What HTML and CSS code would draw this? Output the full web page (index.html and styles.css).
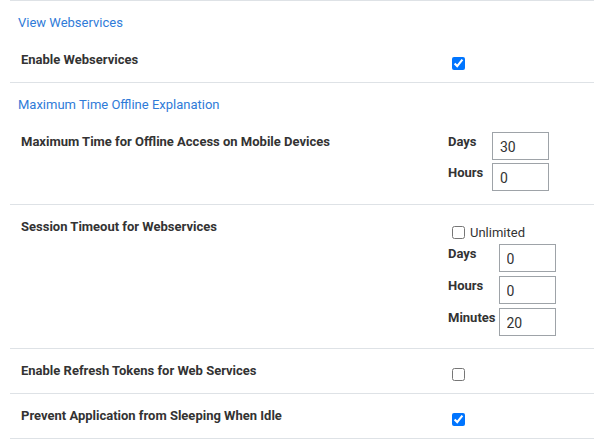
FILE: index.html
```html
<!DOCTYPE html>
<html>
<head>
<meta charset="utf-8">
<link rel="stylesheet" href="styles.css">
</head>
<body>
<div class="page">
  <div class="section">
    <div class="link-row"><a class="link" href="#">View Webservices</a></div>
    <div class="setting">
      <div class="label">Enable Webservices</div>
      <div class="control check-cell"><input type="checkbox" checked></div>
    </div>
  </div>
  <div class="section">
    <div class="link-row"><a class="link" href="#">Maximum Time Offline Explanation</a></div>
    <div class="setting">
      <div class="label">Maximum Time for Offline Access on Mobile Devices</div>
      <div class="control form-cell">
        <div class="fields">
          <span class="flabel">Days</span><input class="num" type="text" value="30">
          <span class="flabel">Hours</span><input class="num" type="text" value="0">
        </div>
      </div>
    </div>
  </div>
  <div class="section">
    <div class="setting">
      <div class="label">Session Timeout for Webservices</div>
      <div class="control unl-cell">
        <label class="unl"><input type="checkbox">Unlimited</label>
        <div class="fields fields-wide">
          <span class="flabel">Days</span><input class="num" type="text" value="0">
          <span class="flabel">Hours</span><input class="num" type="text" value="0">
          <span class="flabel">Minutes</span><input class="num" type="text" value="20">
        </div>
      </div>
    </div>
  </div>
  <div class="section">
    <div class="setting">
      <div class="label">Enable Refresh Tokens for Web Services</div>
      <div class="control check-cell"><input type="checkbox"></div>
    </div>
  </div>
  <div class="section">
    <div class="setting">
      <div class="label">Prevent Application from Sleeping When Idle</div>
      <div class="control check-cell"><input type="checkbox" checked></div>
    </div>
  </div>
</div>
</body>
</html>
```

FILE: styles.css
```css
html, body {
  margin: 0;
  padding: 0;
  background: #fff;
}
body {
  font-family: Roboto, "Liberation Sans", sans-serif;
  font-size: 13px;
  line-height: 15px;
  color: #333;
}
.page {
  margin-left: 10px;
  border-top: 1px solid #dee2e6;
}
.section {
  border-bottom: 1px solid #dee2e6;
}
.link-row {
  height: 37px;
  box-sizing: border-box;
  padding: 14px 8px 0;
}
.link {
  color: #2f7bd8;
  text-decoration: none;
}
.setting {
  display: grid;
  grid-template-columns: 438px 1fr;
  align-items: start;
}
.label {
  font-weight: bold;
  padding: 14px 11px 0;
}
.check-cell {
  padding: 16px 0 9px;
  line-height: 0;
}
.check-cell input,
.unl input {
  width: 13px;
  height: 13px;
  margin: 3px 3px 3px 4px;
  accent-color: #0075ff;
}
.form-cell {
  padding: 12px 0 13px;
}
.unl-cell {
  padding: 17px 0 12px;
}
.unl {
  display: flex;
  align-items: center;
  margin-bottom: 2px;
}
.unl input {
  margin: 4px 5px 3px 4px;
}
.fields {
  display: grid;
  grid-template-columns: minmax(44px, max-content) 57px;
  row-gap: 3px;
}
.fields-wide {
  row-gap: 4px;
}
.flabel {
  font-weight: bold;
  padding: 2px 3px 0 0;
}
.num {
  box-sizing: border-box;
  width: 57px;
  height: 28px;
  margin: 0;
  padding: 2px 7px 0;
  border: 1px solid #9ea3a8;
  border-radius: 0;
  font-family: Roboto, "Liberation Sans", sans-serif;
  font-size: 14px;
  color: #333;
  background: #fff;
}
```
